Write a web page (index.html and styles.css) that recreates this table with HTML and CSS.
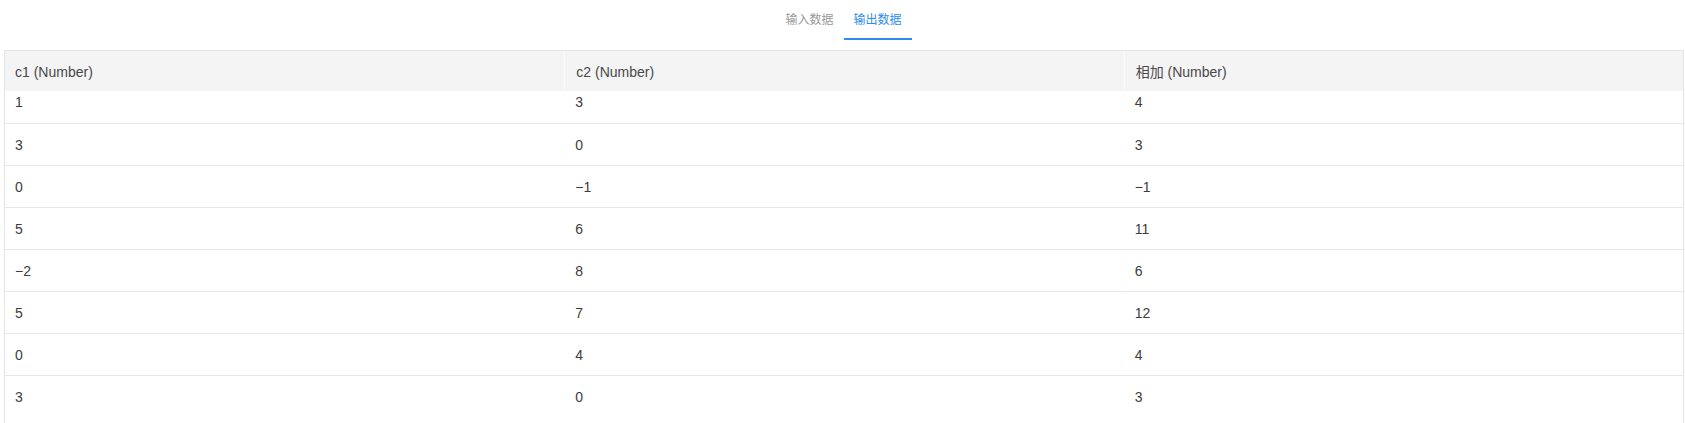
FILE: index.html
```html
<!DOCTYPE html>
<html lang="zh-CN">
<head>
<meta charset="utf-8">
<title>输出数据</title>
<link rel="stylesheet" href="styles.css">
</head>
<body>
<div class="tabs">
  <div class="tab">输入数据</div>
  <div class="tab active">输出数据</div>
</div>
<div class="table">
  <div class="row head">
    <div class="cell">c1 (Number)</div>
    <div class="cell">c2 (Number)</div>
    <div class="cell">相加 (Number)</div>
  </div>
  <div class="body">
    <div class="row first"><div class="cell">1</div><div class="cell">3</div><div class="cell">4</div></div>
    <div class="row"><div class="cell">3</div><div class="cell">0</div><div class="cell">3</div></div>
    <div class="row"><div class="cell">0</div><div class="cell">−1</div><div class="cell">−1</div></div>
    <div class="row"><div class="cell">5</div><div class="cell">6</div><div class="cell">11</div></div>
    <div class="row"><div class="cell">−2</div><div class="cell">8</div><div class="cell">6</div></div>
    <div class="row"><div class="cell">5</div><div class="cell">7</div><div class="cell">12</div></div>
    <div class="row"><div class="cell">0</div><div class="cell">4</div><div class="cell">4</div></div>
    <div class="row last"><div class="cell">3</div><div class="cell">0</div><div class="cell">3</div></div>
  </div>
</div>
</body>
</html>
```

FILE: styles.css
```css
html, body {
  margin: 0;
  padding: 0;
  background: #fff;
  font-family: "Liberation Sans", "Noto Sans CJK SC", sans-serif;
  overflow: hidden;
}

.tabs {
  display: flex;
  justify-content: center;
  height: 40px;
  padding-left: 2px;
}

.tab {
  box-sizing: border-box;
  width: 68px;
  height: 40px;
  padding-top: 11px;
  text-align: center;
  font-size: 12px;
  line-height: 18px;
  color: #999;
  border-bottom: 2px solid transparent;
}

.tab.active {
  color: #2d8cf0;
  border-bottom-color: #2d8cf0;
}

.table {
  margin: 10px 1px 0 4px;
  height: 372px;
  overflow: hidden;
  border: 1px solid #e4e4eb;
  border-bottom: none;
}

.row {
  display: grid;
  grid-template-columns: repeat(3, 1fr);
  height: 41px;
  border-bottom: 1px solid #e6e6e6;
  font-size: 14px;
  color: #3c3c3c;
}

.cell {
  display: flex;
  align-items: center;
  padding-left: 10px;
  line-height: 18px;
}

.row.head {
  height: 40px;
  border-bottom: none;
  background: #f4f4f4;
  color: #484848;
}

.row.head .cell {
  padding-top: 2px;
}

.row.head .cell + .cell {
  border-left: 1px solid #fbfbfb;
}

.row .cell + .cell {
  padding-left: 11px;
}

.row.first {
  height: 32px;
}

.row.first .cell {
  align-items: flex-start;
  padding-top: 2px;
}

.row.last {
  border-bottom: none;
}
```
